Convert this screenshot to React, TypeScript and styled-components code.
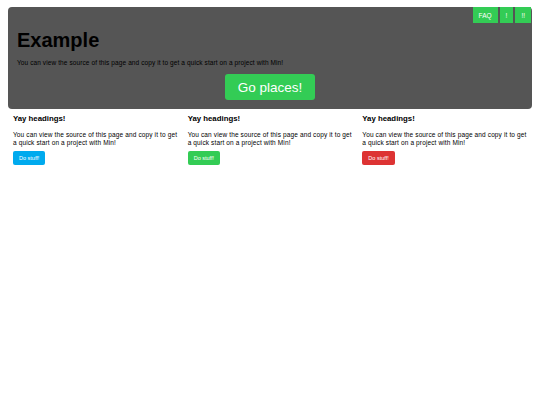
import { styled, createGlobalStyle } from 'styled-components';

const GlobalStyle = createGlobalStyle`
  * {
    box-sizing: border-box;
  }

  body {
    margin: 0;
    background: #fff;
    font-family: 'Liberation Sans', Arial, sans-serif;
    color: #000;
  }
`;

type Tone = 'a' | 'b' | 'c';

const tones: Record<Tone, string> = {
  a: '#0ae',
  b: '#3c5',
  c: '#d33',
};

const cards: { tone: Tone }[] = [{ tone: 'a' }, { tone: 'b' }, { tone: 'c' }];

const App = () => {
  return (
    <>
      <GlobalStyle />
      <Page>
        <Hero>
          <Nav>
            <NavButton>FAQ</NavButton>
            <NavButton>!</NavButton>
            <NavButton>!!</NavButton>
          </Nav>
          <HeroTitle>Example</HeroTitle>
          <HeroText>
            You can view the source of this page and copy it to get a quick start on a project with Min!
          </HeroText>
          <HeroAction>
            <BigButton>Go places!</BigButton>
          </HeroAction>
        </Hero>
        <Row>
          {cards.map((card, i) => (
            <Column key={i}>
              <ColumnTitle>Yay headings!</ColumnTitle>
              <ColumnText>
                You can view the source of this page and copy it to get a quick start on a project with Min!
              </ColumnText>
              <SmallButton $tone={card.tone}>Do stuff!</SmallButton>
            </Column>
          ))}
        </Row>
      </Page>
    </>
  );
};

const Page = styled.div`
  padding: 7px 8px;
`;

const Hero = styled.header`
  display: flex;
  flex-direction: column;
  padding: 0 1px 9px 9px;
  background: #555;
  border-radius: 4px;
`;

const Nav = styled.nav`
  display: flex;
  justify-content: flex-end;
  gap: 2px;
`;

const NavButton = styled.button`
  height: 16px;
  min-width: 13px;
  padding: 0 6px;
  border: none;
  border-radius: 0;
  background: #3c5;
  color: #fff;
  font-family: inherit;
  font-size: 6.5px;
`;

const HeroTitle = styled.h1`
  margin: 6px 0 0;
  font-size: 20px;
  line-height: 23px;
  font-weight: bold;
`;

const HeroText = styled.p`
  margin: 7px 0 0;
  font-size: 6.5px;
  letter-spacing: 0.1px;
  line-height: 8px;
`;

const HeroAction = styled.div`
  display: flex;
  justify-content: center;
  margin-top: 7px;
  padding-right: 8px;
`;

const BigButton = styled.button`
  width: 90px;
  height: 26px;
  border: none;
  border-radius: 3px;
  background: #3c5;
  color: #fff;
  font-family: inherit;
  font-size: 13.5px;
`;

const Row = styled.section`
  display: grid;
  grid-template-columns: repeat(3, 1fr);
`;

const Column = styled.div`
  padding: 5px;
`;

const ColumnTitle = styled.h3`
  margin: 0;
  font-size: 7.8px;
  line-height: 9px;
  font-weight: bold;
`;

const ColumnText = styled.p`
  margin: 8px 0 0;
  font-size: 6.5px;
  letter-spacing: 0.13px;
  line-height: 7.5px;
`;

const SmallButton = styled.button<{ $tone: Tone }>`
  margin-top: 5px;
  height: 14px;
  padding: 0 6px;
  border: none;
  border-radius: 2px;
  background: ${(p) => tones[p.$tone]};
  color: #fff;
  font-family: inherit;
  font-size: 5.5px;
`;

export default App;
